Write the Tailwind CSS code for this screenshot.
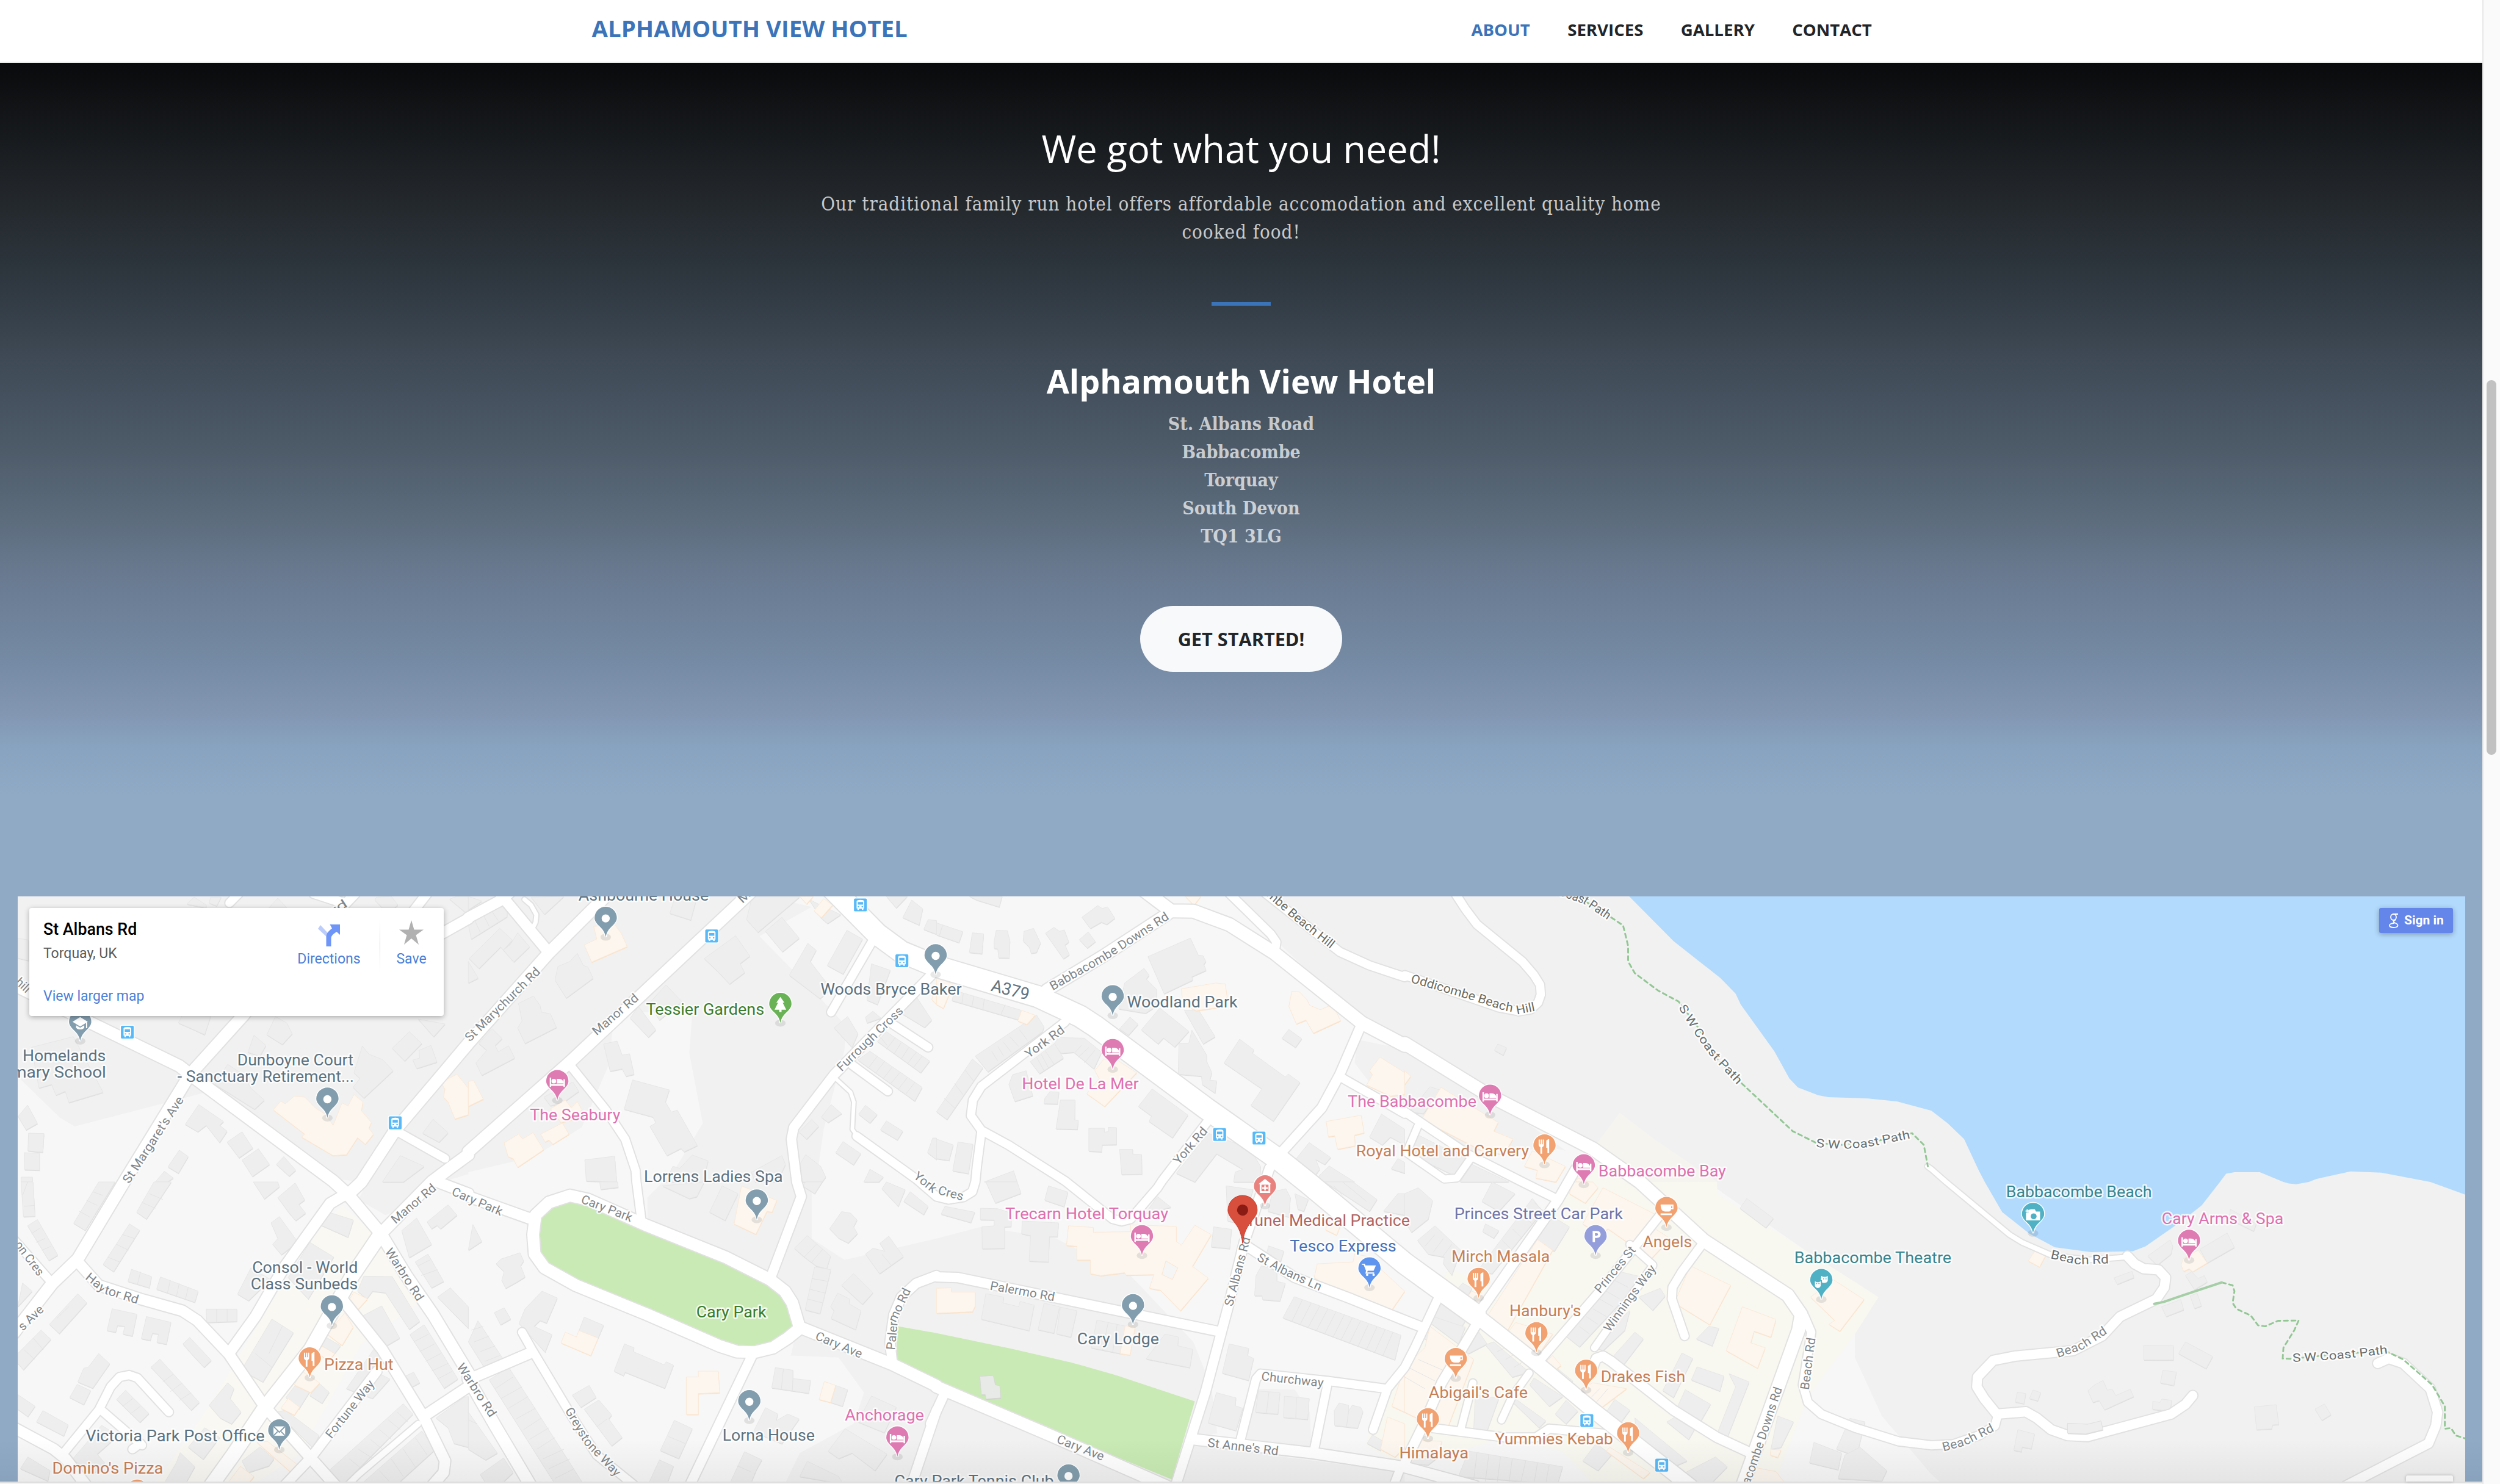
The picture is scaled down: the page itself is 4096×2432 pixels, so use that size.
<!DOCTYPE html>
<html lang="en">
<head>
<meta charset="utf-8">
<title>Alphamouth View Hotel</title>
<script src="https://cdn.jsdelivr.net/npm/@tailwindcss/browser@4"></script>
</head>
<body class="flex h-[2432px] w-[4096px] overflow-hidden bg-white font-['Open_Sans',sans-serif]">

<div class="flex h-[2432px] w-[4067px] flex-col">
  <header class="h-[103px] shrink-0 border-b-2 border-[#e9ecea] bg-white">
    <div class="mx-auto flex h-[101px] w-[2186px] items-center justify-between px-[29px] pb-[8px]">
      <a class="text-[38.4px] leading-[52px] font-bold text-[#3b74b9] pb-[2px] whitespace-nowrap">ALPHAMOUTH VIEW HOTEL</a>
      <nav class="flex gap-[61.4px] pr-[30.7px] pt-[2px] text-[27.6px] leading-[40px] font-bold text-[#212529]">
        <a class="text-[#3b74b9]">ABOUT</a><a>SERVICES</a><a>GALLERY</a><a>CONTACT</a>
      </nav>
    </div>
  </header>

  <section class="flex h-[1366px] shrink-0 flex-col items-center bg-[linear-gradient(180deg,#090a0c_0px,#212529_206px,#2f3840_360px,#3e4955_480px,#4c5967_620px,#5b6b7b_740px,#68798f_830px,#758aa4_980px,#8397b3_1070px,#88a3bf_1120px,#90aac6_1200px)] pt-[103px] text-center text-white">
    <h2 class="text-[61.4px] leading-[74px] whitespace-nowrap">We got what you need!</h2>
    <p class="mt-[31px] w-[1500px] font-['DejaVu_Serif_Condensed','DejaVu_Serif',serif] text-[31px] leading-[46px] tracking-[1px] text-white/75"><span class="whitespace-nowrap">Our traditional family run hotel offers affordable accomodation and excellent quality home</span><br>cooked food!</p>
    <hr class="mt-[92px] h-[6px] w-[97px] border-0 bg-[#3b74b9]">
    <h3 class="mt-[92px] text-[53.7px] leading-[64px] font-bold whitespace-nowrap">Alphamouth View Hotel</h3>
    <address class="mt-[15px] font-['DejaVu_Serif_Condensed','DejaVu_Serif',serif] text-[30px] leading-[46px] font-bold text-white/70 not-italic">St. Albans Road<br>Babbacombe<br>Torquay<br>South Devon<br>TQ1 3LG</address>
    <a class="mt-[91px] flex h-[108px] w-[331px] items-center justify-center rounded-full bg-[#f8f9fa] text-[30.7px] font-bold text-[#212529]">GET STARTED!</a>
  </section>

  <section class="relative h-[959px] shrink-0 bg-[#90aac6] pl-[29px]">
    <svg id="map" class="block h-[959px] w-[4010px] bg-[#f7f7f7]" viewBox="30 1532 4182 1000" preserveAspectRatio="none"></svg>
    <div class="absolute top-[19px] left-[48px] flex h-[177px] w-[679px] rounded-[4px] bg-white font-[Roboto,sans-serif] shadow-[0_2px_8px_rgba(0,0,0,0.3)]">
      <div class="flex flex-1 flex-col pt-[18px] pl-[23px]">
        <b class="text-[26.8px] leading-[34px] font-medium text-black">St Albans Rd</b>
        <span class="mt-[8px] text-[23px] leading-[30px] text-[#5b5b5b]">Torquay, UK</span>
        <a class="mt-[40px] text-[23px] leading-[30px] text-[#4a80d9]">View larger map</a>
      </div>
      <div class="mr-[27px] flex w-[111px] flex-col items-center pt-[27px]">
        <svg class="h-[36px] w-[36px]" viewBox="0 0 36 36"><path d="M3 2L17 17L15 23L-1 8Z" transform="translate(1 -1)" fill="#bdcdfb"/><path d="M13.500 36V22C13.500 15 16 12 23 6.500L19.500 0H36V17L30.500 12C23 17 21.500 19 21.500 24V36Z" fill="#6e95f7"/></svg>
        <span class="mt-[8px] text-[23px] leading-[26px] text-[#4a80d9]">Directions</span>
      </div>
      <div class="mt-[19px] h-[85px] w-[1.500px] bg-[linear-gradient(180deg,#fff,#d8d8d8_50%,#fff)]"></div>
      <div class="mr-[2px] flex w-[102px] flex-col items-center pt-[20px]">
        <svg class="h-[40px] w-[40px]" viewBox="0 0 40 40"><path d="M20 0L24.500 15.500H40L27.500 24.500L32 40L20 30L8 40L12.500 24.500L0 15.500H15.500Z" fill="#b1b1b1"/></svg>
        <span class="mt-[11px] text-[23px] leading-[26px] text-[#4a80d9]">Save</span>
      </div>
    </div>
    <a class="absolute top-[19px] right-[48px] flex h-[41px] w-[121px] items-center gap-[9px] rounded-[3px] bg-[#6485ea] pl-[16px] text-white shadow-[0_2px_8px_rgba(0,0,0,0.3)]">
      <svg class="h-[24px] w-[16px]" viewBox="0 0 16 24" fill="none" stroke="#fff" stroke-width="1.800"><ellipse cx="7.500" cy="6" rx="4.500" ry="5"/><path d="M15 1H9M11 9C11 12 7 12 7.500 14C8 15.500 14.500 16 14.500 19.500C14.500 22 11 23 7.500 23S1 22 1 19.500S5 15.800 9 16"/></svg>
      <span class="font-[Roboto,sans-serif] text-[21px] font-bold whitespace-nowrap">Sign in</span>
    </a>
    <div class="absolute right-[48px] bottom-0 h-[10px] w-[77px] rounded-t-[3px] bg-white shadow-[0_0_5px_rgba(0,0,0,0.25)]"></div>
    <div class="absolute bottom-0 left-0 h-[70px] w-full bg-[linear-gradient(180deg,rgba(0,0,0,0),rgba(0,0,0,0.05))]"></div>
  </section>
  <div class="h-[4px] shrink-0 border-t-2 border-[#dedede] bg-[#f3f3f3]"></div>
</div>

<aside class="h-[2432px] w-[29px] border-l-2 border-[#e8e8e8] bg-[#fafafa] pt-[623px] pl-[5px]">
  <div class="h-[614px] w-[16px] rounded-full bg-[#c1c1c1]"></div>
</aside>

<script>
// Survey sheets: origin x, origin y, x units per pixel, y units per pixel.
const SHEET = {
  A:[0,1500,1.96,3], B:[800,1500,1.96,3], C:[1600,1500,1.96,3], D:[2400,1500,1.742,3], E:[3300,1500,1.613,3],
  F:[0,2020,1.96,3], G:[800,2020,1.96,3], H:[1600,2020,1.96,3], I:[2400,2020,1.742,3], J:[3300,2020,1.613,3]
};
function pts(s){
  let t, out=[];
  for(const k of s.trim().split(/\s+/)){
    if(SHEET[k]) t=SHEET[k];
    else { const [x,y]=k.split(',').map(Number); out.push([t[0]+x/t[2], t[1]+y/t[3]]); }
  }
  return out;
}
const d = (s,close)=>'M'+pts(s).map(p=>p[0].toFixed(1)+' '+p[1].toFixed(1)).join('L')+(close?'Z':'');
let out='';
const poly=(s,fill,extra='')=>{ out+=`<path d="${d(s,1)}" fill="${fill}" ${extra}/>`; };

// Land tones
poly('A 59,96 B 1000,96 1150,150 975,300 1180,620 1265,760 1260,880 1190,1290 1165,1560 G 1150,20 1150,290 1260,400 1568,290 H 0,290 150,230 400,290 650,480 860,820 920,1050 940,1290 870,1300 860,1350 1568,1490 1568,1548 G 1060,1548 1110,1390 1290,1240 1325,1080 1240,900 1080,890 1100,760 600,190 600,80 B 690,1500 785,1260 740,900 750,690 490,690 470,960 380,1280 220,1430 0,1510 A 1568,1520 1480,1560 1210,1560 1100,1540 690,1100 250,1275 200,1230 59,1020','#f1f1f1');
poly('C 1000,96 1135,320 1430,745 1568,870 D 250,1115 560,1390 700,1560 I 900,0 1200,360 1410,590 1340,780 1340,900 1420,1200 1568,1500 J 30,1548 1471,1548 E 1471,96','#f1f1f1');
poly('C 1410,830 1400,950 1450,1050 1568,1180 D 200,1400 450,1390 480,1400 250,1120 0,880','#f1f1f1');
poly('F 1200,90 1230,0 1440,0 1360,130 1290,170','#f1f1f1');
poly('H 1070,1060 1200,1065 1250,1180 1255,1360 1030,1330','#f1f1f1');
// Shopping areas
poly('F 1145,120 1250,260 1420,600 1210,830 1000,1400 850,1548 520,1548 700,1150 900,640 1060,260','#f9f8f2');
poly('I 930,60 1200,360 1410,590 1340,780 1200,1100 1100,1548 560,1548 470,1380 300,1310 0,1460 H 1440,1350 1450,1270 1568,900 I 60,700 130,440 330,600 500,0 D 560,1390 640,1340 750,1350 930,1560','#f8f7f0');
poly('D 640,1205 750,1350 930,1560 700,1560 560,1390','#f5f4ee');
// Sea and parks
poly('D 668,96 800,325 940,515 985,595 1000,650 1050,770 1100,890 1145,1030 1170,1075 1230,1115 1260,1125 1380,1132 1465,1147 1568,1195 E 0,1195 45,1260 90,1340 130,1500 J 147,0 195,155 270,265 340,335 440,360 555,355 590,330 690,200 745,120 795,0 E 812,1518 835,1510 905,1510 970,1560 J 985,8 1005,12 1040,0 E 1060,1545 1155,1506 1240,1512 1375,1560 J 1375,0 1471,65 E 1471,96','#b2dafc');
poly('G 335,95 280,125 240,190 232,270 240,370 265,420 370,515 600,645 850,820 900,840 960,845 1020,820 1060,780 1090,735 1070,630 1050,580 1020,530 850,410 600,255 375,102','#c9eab4');
poly('G 1432,738 1568,775 H 0,775 250,855 450,925 600,990 865,1125 788,1525 380,1270 0,1015 G 1568,1015 1437,930','#c9eab4');

// Buildings
const grey=`A 650,100 690,140 690,155 625,135|A 705,100 740,100 725,145 700,130|A 930,105 960,155 900,155|A 1260,100 1310,96 1332,140 1320,155 1280,155 1255,115|A 1530,96 1568,96 1568,190 1505,110|A 59,310 95,320 95,425 59,412
A 610,705 705,710 685,805 635,770 597,745|A 105,870 245,815 345,1100 230,1153 218,1095 187,1115 172,1060 130,1078|A 850,808 890,860 870,915 830,895|A 922,712 960,745 978,800 945,855 893,805|A 1370,790 1412,850 1355,940 1313,875|A 1443,860 1463,945 1395,978 1382,935 1405,925 1403,885
A 1213,863 1235,905 1280,932 1316,990 1218,1130 1182,1075 1205,1030 1185,1000|A 762,957 815,1010 840,1080 885,1140 852,1187 720,1060|A 665,1163 748,1250 735,1270 760,1300 735,1358 690,1270 662,1303 620,1265|A 810,1303 846,1387 800,1436 760,1356|A 865,1390 902,1470 845,1532 810,1448|A 600,1397 630,1430 597,1515 562,1483|A 950,1430 990,1500 968,1530 925,1470|A 95,1310 147,1312 143,1408 93,1400|A 80,1410 132,1413 132,1500 82,1497|A 92,1166 125,1260 87,1293 60,1225|A 1450,1238 1500,1308 1470,1356 1415,1310|A 1340,1425 1420,1480 1350,1560 1280,1560|A 1400,725 1490,750 1452,815|A 550,1505 580,1540 560,1560 520,1560|A 70,1535 108,1535 108,1560 70,1560
B 105,260 148,320 118,370 140,345 165,283 205,355 152,432 108,355 36,465 3,415|B 0,240 75,165 130,145 130,200 10,315|B 210,100 320,96 255,188|B 0,96 45,120 0,165|B 365,388 385,450 400,458 418,515 328,617 290,525 300,455 340,430|B 218,607 240,655 245,690 275,698 295,768 190,850 165,770 180,735 168,645|B 80,775 113,825 90,860 100,893 135,862 155,925 45,1013 25,950 62,885 35,850|B 0,430 33,515 0,540|B 690,110 762,120 745,217 675,183
B 950,98 1110,98 970,280 932,215|B 1050,203 1108,310 1052,380 995,275|B 1140,110 1165,130 1247,190 1203,235 1180,205|B 895,298 943,402 910,440 925,487 875,545 835,480 790,415|B 1137,337 1165,372 1145,430 1215,570 1178,620 1075,500|B 1268,270 1320,315 1255,494 1202,450|B 1350,442 1413,475 1370,650 1335,628|B 662,550 715,635 640,730 605,645|B 570,660 628,780 603,818 542,720|B 498,838 515,910 540,903 555,1008 528,1018 515,980 475,992 453,853|B 350,1048 370,1095 320,1150 275,1170 253,1125
B 550,1037 673,1088 660,1150 680,1202 700,1192 767,1373 723,1405 712,1388 665,1425 608,1275 628,1258 618,1227 522,1187|B 1270,712 1305,800 1285,870 1225,770|B 1400,790 1545,940 1515,1000 1370,840|B 1345,890 1520,1075 1495,1145 1305,935|B 1355,685 1382,720 1335,745 1330,715|B 1500,610 1552,730 1528,768 1445,690|B 1215,1163 1250,1210 1205,1255 1182,1228|B 1150,1240 1173,1275 1133,1340 1108,1305|B 1330,1167 1369,1215 1345,1258 1307,1213|B 1400,1247 1455,1300 1437,1345 1380,1293|B 1255,1353 1314,1415 1290,1472 1230,1410|B 1130,1420 1180,1480 1197,1535 1185,1560 1115,1560 1100,1495
B 390,1447 490,1428 497,1560 395,1555|B 750,1422 803,1452 785,1560 660,1560 685,1480 708,1490|B 1050,1425 1062,1470 1035,1560 960,1560 948,1510|B 1400,96 1470,96 1433,155|B 1485,115 1522,160 1510,243 1455,205|B 1540,215 1568,220 1568,290 1525,265|B 1345,1495 1390,1535 1375,1560 1325,1560|B 1555,1335 1568,1335 1568,1445 1538,1410
C 110,96 220,96 210,150 135,115|C 0,232 88,277 75,333 0,293|C 120,283 158,288 152,390 110,383|C 200,270 237,272 246,325 243,412 208,410 205,365 193,362 193,325|C 325,260 348,335 335,383 317,388 310,355 290,325 293,275|C 393,255 412,275 428,268 443,330 430,345 445,395 425,416 365,285|C 540,143 555,158 573,150 597,208 570,240 552,228 515,260 487,203|C 508,278 532,328 505,361 478,318|C 695,465 712,500 702,520 738,575 735,660 700,695 610,672 630,540|C 648,715 675,752 643,808 613,775|C 748,668 845,788 798,868 760,822 742,852 686,780|C 830,680 878,680 933,815 893,852
C 850,310 877,398 892,400 902,430 895,445 903,475 855,508 858,525 762,595 708,405
C 855,782 905,910 905,942 922,1000 915,1038 938,1042 933,1105 890,1060 887,1018 809,1007 812,850 845,848|C 1180,778 1223,826 1202,870 1157,823|C 1015,828 1062,882 1058,900 1168,1022 1178,1007 1217,1050 1128,1248 1053,1167 1090,1083 963,950|C 722,1083 842,1217 790,1333 712,1250 720,1222 676,1173|C 408,820 495,823 553,895 527,980 460,895 418,900 393,855|C 395,850 425,925 345,1005 314,943|C 335,705 360,765 355,790 172,995 130,915|C 120,930 155,975 35,1240 0,1200|C 300,990 322,1118 262,1147 242,1060 255,1010|C 380,1097 410,1100 405,1160 360,1158 363,1130|C 415,1140 464,1140 463,1243 475,1245 472,1290 400,1288
C 510,1285 562,1285 562,1305 575,1302 575,1280 603,1282 603,1368 555,1370 553,1405 510,1402|C 613,1393 657,1393 657,1417 687,1420 688,1520 620,1522|C 0,1340 56,1370 42,1450 0,1440|C 72,1355 122,1367 107,1517 54,1503|C 258,1503 270,1560 160,1560|C 60,578 280,678 300,740 52,630|C 910,1310 1050,1390 1085,1480 1083,1560 995,1560 1000,1510 1025,1495 938,1415 865,1560 803,1515|C 1248,1358 1320,1435 1300,1470 1270,1445 1283,1495 1265,1533 1200,1450|C 1315,1478 1400,1560 1290,1560 1280,1530|C 1490,1212 1568,1290 1568,1370 1520,1330 1493,1370 1450,1330|C 1545,1440 1568,1460 1568,1515 1523,1493
D 277,853 303,872 293,910 267,885|D 75,1072 108,1090 55,1210 15,1200|D 35,1315 180,1440 150,1530 20,1420|D 200,1470 310,1560 165,1560
F 70,0 110,0 117,175 78,178|F 125,193 193,375 163,403 92,225|F 330,0 385,0 285,248 246,212|F 515,0 573,0 490,190 457,155|F 433,215 467,248 380,460 345,423|F 848,0 930,0 935,25 885,87|F 988,5 1020,92 1000,115 1023,160 990,198 968,160 930,80|F 935,178 997,308 942,373 913,320 930,290 907,210|F 440,448 507,485 500,543 428,510|F 537,487 663,560 652,617 524,550|F 690,652 793,652 793,715 692,720|F 375,650 458,678 443,790 412,780 417,740 393,735 387,770 358,762|F 490,690 572,720 557,832 525,822 530,780 510,775 503,812 473,803|F 260,573 290,620 198,777 165,730|F 137,760 170,807 78,963 59,930 59,880
F 635,797 707,915 683,950 640,880 612,830|F 330,880 367,932 310,1057 260,1025 280,955 295,950|F 258,1038 303,1070 280,1142 233,1105|F 535,908 667,1130 640,1170 505,950|F 420,1068 498,1187 468,1232 390,1115|F 143,1172 228,1245 213,1302 122,1230|F 59,1090 117,1150 93,1203 59,1165|F 93,1410 167,1480 160,1533 68,1470|F 340,1248 395,1300 325,1395 350,1440 310,1500 243,1420|F 75,518 107,560 59,640|F 910,703 982,773 880,1025 808,965|F 762,1030 783,1060 770,1110 807,1180 775,1240 737,1210 700,1145|F 685,1260 735,1310 680,1422 630,1360|F 603,1388 652,1460 620,1548 548,1548 590,1440
F 1110,160 1183,195 1165,283 1065,215 1075,172|F 1037,310 1117,385 1032,600 965,490|F 840,440 905,500 832,608 795,575|F 1218,483 1313,485 1405,715 1370,755 1290,568 1247,560 1228,600 1197,560|F 1278,635 1338,800 1275,857 1210,690|F 1395,185 1445,320 1370,388 1345,250|F 1500,117 1530,170 1475,240 1463,222 1445,240 1430,205|F 1433,370 1485,510 1445,543 1390,410|F 1420,732 1533,1010 1487,1057 1372,783|F 1508,543 1568,640 1568,750 1465,590|F 1255,850 1280,883 1240,960 1305,1010 1247,1110 1160,1060|F 1350,1137 1382,1190 1150,1548 1120,1548 1098,1485|F 1412,1277 1458,1370 1330,1548 1210,1548|F 1555,1103 1568,1100 1568,1360 1520,1340 1500,1260 1460,1210|F 955,1170 1068,1300 1047,1362 927,1180|F 1070,1035 1102,1078 1078,1135 1037,1095|F 870,1358 917,1420 900,1455 830,1490 810,1430
F 1090,795 1140,840 1120,880 1072,835|F 990,1040 1037,1075 1000,1165 957,1105|F 1385,975 1405,1030 1380,1050 1358,995
G 15,218 45,305 0,350|G 173,363 185,405 175,430 190,487 160,515 125,545 112,505 120,460 93,420 110,395|G 120,645 142,703 108,732 87,670|G 247,560 298,595 262,723 240,710 220,740 280,783 257,873 170,725 190,650|G 388,693 453,735 435,800 370,765|G 523,830 555,850 552,870 655,937 663,922 687,940 658,1057 525,975 520,993 488,970|G 32,712 122,920 65,980 0,820|G 135,950 385,1548 290,1548 70,1015|G 405,1043 428,1105 377,1155 348,1093|G 437,1118 480,1195 470,1215 515,1310 480,1353 388,1165|G 690,1222 750,1265 705,1418 643,1377|G 640,1425 687,1458 665,1548 603,1548|G 925,1383 983,1425 965,1475 945,1548 875,1548
G 850,20 903,60 860,197 808,155|G 650,20 790,0 765,75 740,85|G 1135,275 1213,380 1200,445 1165,430 1125,385 1092,340|G 1160,435 1214,450 1178,675 1128,655|G 1250,152 1280,160 1302,195 1290,230 1303,265 1272,313 1240,288 1210,240|G 1408,278 1457,383 1377,470 1330,370 1355,340 1395,355 1378,315|G 1290,470 1355,568 1320,627 1250,530|G 1237,570 1277,600 1275,625 1315,660 1297,757 1215,700 1225,660 1213,640|G 1028,952 1087,965 1087,1008 1146,1018 1140,1083 1016,1055|G 1230,1043 1270,1065 1253,1150 1213,1130|G 995,1157 1037,1190 1030,1225 1070,1190 1108,1215 1050,1342 955,1280|G 1350,1097 1433,1155 1393,1285 1305,1230|G 1262,1265 1402,1395 1362,1480 1285,1390 1240,1418 1205,1380|G 1135,1432 1240,1510 1255,1548 1110,1510|G 1480,50 1540,125 1525,167 1458,100|G 1400,0 1463,40 1440,125 1385,35|G 1130,0 1185,0 1160,60 1120,20|G 440,0 500,0 502,27 443,38|G 0,1180 97,1390 58,1425 0,1370|G 118,1415 150,1490 110,1548 60,1548 40,1500
H 375,20 440,52 427,127 362,93|H 165,0 270,0 283,58 197,108|H 28,125 128,155 115,208 15,165|H 147,135 205,137 250,160 250,228 228,230 228,340 153,342 152,230 193,225 193,195 147,193|H 287,200 409,210 405,280 378,280 375,410 310,405 315,275 285,265|H 165,573 225,590 222,620 275,640 280,612 327,632 310,762 150,703|H 360,622 412,640 393,775 340,757|H 415,642 470,660 450,795 402,778|H 537,708 635,740 615,880 518,850|H 765,780 810,795 808,840 858,858 848,952 702,907|H 928,230 988,243 982,342 920,332|H 980,830 1045,853 1042,890 1062,905 1045,1017 957,980|H 937,1080 1003,1107 1000,1147 1025,1160 1003,1275 910,1235|H 1112,328 1163,355 1150,420 1100,400|H 1070,480 1088,430 1140,450 1140,510 1168,520 1150,610 1092,603 1090,583 1065,583
H 1198,588 1555,785 1535,912 1160,697|H 1078,1072 1150,1080 1143,1190 1068,1180|H 1165,1098 1248,1110 1243,1217 1162,1207|H 1348,1133 1380,1145 1380,1175 1392,1145 1420,1155 1428,1178 1410,1262 1333,1248 1332,1172|H 1460,1297 1497,1330 1487,1377 1442,1340|H 1300,0 1395,0 1475,90 1450,150|H 970,20 1060,40 1050,90 1010,210 975,200|H 1125,50 1170,35 1185,80 1180,180 1110,150|H 740,75 785,130 700,160|H 1200,60 1245,90 1230,150 1210,140|H 1545,60 1568,60 1568,170 1497,150
I 260,0 328,60 280,150 230,100|I 90,225 167,350 140,478 115,420 118,385 70,370 38,300|I 40,30 83,95 70,190 20,258 0,200 0,60|I 240,215 280,250 265,288 232,255|I 380,85 410,150 260,470 215,460|I 415,150 490,230 445,355 375,295|I 172,518 200,545 180,610 143,580|I 120,590 188,690 160,770 80,700|I 85,690 180,745 160,830 78,725|I 65,765 145,830 120,890 58,800|I 215,755 245,830 190,880 170,860|I 265,820 370,975 320,1000 240,835|I 385,1005 470,1100 430,1150 372,1040|I 640,460 712,490 520,845 480,790 590,570|I 670,660 655,760 590,865 570,850 620,730|I 685,770 710,805 650,940 615,905|I 760,545 775,585 738,658 697,590|I 905,740 935,750 915,840 868,805|I 1018,85 1097,187 1075,235 998,135|I 870,948 950,995 938,1072 853,1015|I 825,877 857,905 800,1105 768,1070|I 965,983 1025,1025 960,1310 930,1290 985,1050|I 835,1065 910,1140 880,1230 805,1180
I 1110,1200 1157,1230 1120,1360 1090,1370|I 1325,1212 1370,1230 1345,1405 1285,1370|I 1218,1335 1300,1390 1290,1475 1205,1440|I 1355,1360 1435,1480 1420,1533 1290,1520 1310,1400|I 925,1410 960,1460 910,1548 850,1548 835,1490|I 625,1115 670,1170 640,1240 600,1180|I 685,1210 840,1430 800,1460 690,1290|I 570,1340 615,1400 575,1480 530,1430|I 190,1380 470,1460 455,1548 160,1510|I 320,1100 420,1225 400,1260 310,1110|I 480,1120 515,1175 480,1240 448,1190|I 450,950 500,1020 490,1090 430,990|I 210,1090 280,1110 240,1300 205,1280|I 30,1420 100,1410 70,1450 20,1445|I 810,1200 865,1260 845,1320 780,1230
J 658,297 665,330 660,370 622,427 596,380|J 815,262 835,335 760,415 740,345|J 824,140 895,215 888,252 820,190|J 553,458 558,490 512,525 503,492|J 717,460 735,495 752,480 760,512 725,552 700,480|J 732,570 744,635 725,648 713,585|J 687,603 695,655 647,690 634,640|J 585,838 667,840 667,913 585,912|J 700,820 775,895 757,957 681,880|J 638,965 675,975 668,1043 631,1030|J 473,1018 485,1068 498,1062 508,1095 548,1063 557,1100 477,1168 462,1120 445,1130 431,1070 450,1040|J 237,1077 260,1085 255,1137 231,1128|J 280,1067 301,1080 293,1122 270,1110|J 635,1113 662,1120 658,1175 609,1165 610,1125 630,1130|J 890,1153 950,1142 957,1243 940,1245 938,1265 896,1270|J 1083,1138 1101,1193 1076,1222 1057,1165|J 238,1270 284,1292 275,1368 250,1358 248,1383 227,1375`;
const cream=`A 985,1120 1020,1125 1055,1180 1090,1215 1115,1270 1145,1155 1165,1170 1185,1112 1215,1150 1210,1195 1243,1255 1235,1285 1250,1315 1223,1367 1197,1333 1160,1420 1115,1425 1010,1330 1020,1315 915,1190 940,1145 955,1160|A 1530,1008 1568,1080 1568,1215 1523,1237 1500,1150 1485,1125 1490,1085 1476,1050
B 420,250 490,240 512,285 532,353 413,433 388,345 430,315|B 325,1140 345,1180 365,1147 380,1190 350,1240 310,1255 275,1185|B 0,1045 18,1040 50,1135 0,1172|B 168,1315 182,1340 217,1307 252,1395 165,1485 150,1440 133,1430 120,1360|B 315,1258 337,1315 283,1367 270,1345 257,1355 242,1315|B 1110,96 1155,96 1133,135|B 1190,108 1220,140 1182,205 1158,170|B 1568,540 1568,650 1552,625
C 833,96 885,96 862,142|C 0,500 55,550 23,670 0,650|C 820,570 935,540 967,545 973,610 945,665 870,682 825,650|C 285,680 330,705 303,752 272,735|C 1190,583 1215,585 1240,625 1250,655 1285,677 1327,650 1353,733 1262,797 1237,730 1205,750 1180,660|C 560,930 605,935 670,1000 563,1173 503,1107 545,1030 530,990|C 1485,920 1568,1000 1568,1110 1520,1120 1440,1063 1460,1010 1450,990|C 1305,1250 1422,1218 1432,1308 1400,1320 1402,1375 1343,1392 1333,1323 1312,1328
D 108,1075 160,1130 278,1255 265,1300 322,1340 295,1420 230,1400 50,1240|D 380,1400 478,1480 450,1560 390,1540 395,1500 356,1480|D 0,990 18,1018 0,1060|D 515,1540 550,1560 510,1560
F 1185,565 1230,600 1190,668 1155,640|F 1155,670 1182,745 1145,838 1095,780|F 1070,835 1120,880 1100,920 1060,870|F 1010,970 1070,1030 1040,1080 985,1040|F 965,1110 1003,1155 985,1195 940,1160|F 895,1330 1000,1455 980,1497 860,1335|F 805,1458 850,1510 830,1548 760,1548
G 325,770 362,795 370,762 435,800 410,890 310,825|G 915,20 1033,95 1017,155 1000,150 963,268 890,215|G 770,970 837,970 842,1080 770,1085 770,1192 730,1192 730,1000 770,1000|G 1192,1023 1230,1043 1213,1130 1175,1115
H 442,225 525,233 525,258 650,255 650,220 803,228 803,305 820,325 865,222 920,270 857,433 910,493 817,660 750,555 713,545 728,475 635,478 630,465 550,480 515,470 515,400 470,400 470,330 435,325|H 0,545 50,543 50,565 130,565 130,635 120,665 0,673|H 632,737 665,745 648,887 615,880|H 1275,420 1395,410 1400,370 1440,380 1568,560 1525,655 1310,535 1265,490|H 1310,200 1353,220 1340,273 1303,245|H 1510,1205 1568,1240 1568,1360 1535,1410 1487,1370|H 1560,980 1568,980 1568,1180 1525,1150
I 500,0 560,0 575,30 537,108 490,60|I 590,30 750,170 680,330 605,240 580,270 530,215|I 395,295 440,350 300,780 245,690|I 183,595 225,640 240,590 200,560|I 330,720 440,780 390,905 300,790|I 75,740 205,910 130,1250 90,1255 0,1180 0,950 60,850|I 440,890 465,940 440,975 412,935|I 560,1030 660,1060 575,1170 510,1075|I 850,430 970,530 908,732 803,620|I 1005,640 1105,705 1090,795 1040,765 1030,825 1073,850 1050,955 957,865|I 1275,500 1367,603 1295,765 1263,730 1280,710 1208,590|I 745,240 790,290 730,400 700,350|I 610,1360 730,1490 710,1520 600,1380|I 1090,1370 1120,1375 1110,1412 1088,1400|I 1045,1465 1105,1485 1130,1540 1030,1540|I 40,1325 110,1330 100,1410 25,1400
J 288,345 316,372 298,436 267,405|J 735,350 760,415 720,460 710,445 695,458 688,425 695,390`;
const each=(s,f)=>s.split(/[|\n]/).filter(Boolean).forEach(f);
const building=(s,fill,edge,shade)=>{ const p=d(s,1); out+=`<path d="${p}" fill="${shade}" transform="translate(.5 1.6)"/><path d="${p}" fill="${fill}" stroke="${edge}" stroke-width="1"/>`; };
each(grey,s=>building(s,'#eeeeee','#e6e6e6','#dfdfdf'));
each(cream,s=>building(s,'#fcf6ef','#fbe8d5','#f9e2ca'));
poly('H 768,405 808,440 790,500 755,475','#f5f5f5','stroke="#fbe3cb"');
building('H 145,997 190,992 197,1040 212,1045 215,1107 165,1113 163,1090 150,1090','#e8eae7','#d5d8d2','#cfd2cc');
// Party walls across the terraces
each(`B 1403,860 1370,800|F 92,0 75,70|F 115,120 80,125|F 135,235 105,265|F 150,290 120,310|F 170,330 140,350|F 345,70 310,50|F 325,120 290,95|F 300,180 265,150|F 545,90 500,60|F 520,135 475,105|F 450,290 410,270|F 430,350 390,320|F 400,410 360,385|F 470,460 460,525|F 570,505 560,570|F 600,520 590,590|F 630,540 620,605|F 725,652 725,718|F 760,652 760,716|F 230,640 190,700|F 145,860 110,800|F 115,910 80,860|F 580,985 545,1025|F 610,1030 570,1075|F 640,1080 600,1120|F 445,1110 410,1150|F 470,1150 435,1190|F 1465,450 1410,480|F 1440,400 1400,430|F 1435,780 1385,820|F 1455,830 1405,870|F 1475,880 1425,920|F 1500,930 1445,970|F 1515,970 1465,1010|F 1330,1180 1365,1230|F 1300,1220 1340,1270|F 1270,1270 1310,1320|F 1240,1320 1280,1370|F 1200,1370 1250,1420|F 1170,1420 1210,1470|F 1390,1310 1430,1400|F 1350,1370 1390,1460|F 1310,1420 1350,1510|F 1270,1480 1310,1548|F 945,740 900,880|F 855,880 910,950
G 10,760 50,740|G 20,820 70,790|G 40,870 90,840|G 55,920 105,890|G 90,1060 150,1000|G 110,1110 180,1050|G 135,1160 200,1100|G 160,1215 225,1160|G 185,1270 245,1210|G 205,1320 270,1260|G 230,1370 290,1310|G 250,1420 320,1370|G 270,1470 340,1420|G 290,1520 355,1470|G 0,1220 30,1240|G 1150,495 1205,510|G 1143,550 1195,570|G 1135,600 1187,620|G 1165,320 1125,385|G 1187,345 1148,415|G 1385,370 1415,425|G 1055,960 1048,1065|G 1087,1008 1085,1070|G 670,1305 725,1340|G 900,1455 945,1485|G 430,1255 465,1215
H 1225,605 1190,715|H 1255,620 1218,730|H 1283,637 1245,745|H 1310,652 1272,762|H 1337,668 1300,778|H 1365,683 1328,795|H 1392,698 1355,810|H 1420,713 1383,826|H 1447,728 1412,842|H 1475,743 1440,858|H 1502,758 1467,874|H 1528,772 1495,890|H 575,720 555,862|H 605,730 590,872|H 1113,1078 1105,1185|H 1205,1105 1203,1212|H 1380,1175 1373,1255|H 1330,20 1360,70|H 1360,0 1440,100
C 20,245 10,295|C 90,590 85,645|C 125,605 118,665|C 160,620 155,680|C 230,650 215,705|C 278,780 305,835|C 245,815 275,865|C 225,845 250,895|C 205,865 225,915|C 185,890 205,940|C 365,890 395,960|C 350,905 375,975|C 335,920 360,990|C 485,860 465,895|C 510,870 475,920|C 530,885 495,950|C 95,985 125,1045|C 60,1055 90,1115|C 25,1130 60,1180
B 1430,820 1400,880|B 1450,845 1425,905|B 1475,870 1450,930|B 1500,895 1470,955|B 1520,915 1490,975|B 1370,915 1340,975|B 1395,940 1365,1000|B 1420,970 1390,1030|B 1445,1000 1415,1055|B 1470,1025 1440,1085|B 1495,1050 1465,1110|B 20,215 40,280|B 50,190 70,250|B 75,165 100,220
I 620,500 665,540|I 600,560 640,600|I 580,600 620,640|I 560,650 600,690|I 540,690 575,730|I 520,740 550,780|I 385,105 420,160|I 350,170 385,225|I 320,240 350,290|I 290,300 320,350|I 215,1390 205,1530|I 250,1400 240,1535|I 285,1410 275,1540|I 320,1420 310,1545|I 360,1430 345,1545|I 395,1440 385,1545|I 430,1450 420,1545|I 580,1060 540,1130|I 605,1060 560,1150|I 275,870 300,850|I 300,910 325,885|I 325,950 350,925|I 0,1000 60,1060|I 10,950 90,1020|I 40,910 120,970|I 90,270 60,330|I 115,290 85,360|I 140,320 110,390`,s=>{out+=`<path d="${d(s)}" stroke="#e3e3e3" stroke-width="1" fill="none"/>`});

// Roads: width, then centre line
const roads=[
[20,'A 40,545 300,742 600,965 645,1020 1115,1555 F 1165,65 1275,265 1360,480 1450,680 1568,980 G 0,1010 90,1250 210,1560'],
[20,'A 960,420 815,705 635,1010 605,1085 415,1560 F 260,395 175,520 40,785'],[14,'F 40,285 175,520'],[14,'A 768,130 800,80'],
[18,'F 260,410 330,530 470,600 610,660 660,710 765,880 885,1150 1040,1415 1125,1560'],
[18,'F 1155,65 1105,110 950,440 855,690 768,875'],
[20,'B 470,80 270,385 0,850 A 1568,850 1480,1010 1325,1290 1210,1560 F 1165,65'],
[14,'A 1340,1310 1490,1440'],[20,'B 970,40 340,945 0,1405 A 1568,1420 1505,1490 1445,1560 F 1275,265'],
[24,'F 1275,265 1180,480 1040,860 885,1160 780,1400 705,1560'],
[16,'F 1262,970 1040,1415 950,1560'],[18,'F 1145,600 1280,860 1400,1160 1420,1210 1490,1430 1485,1490 1445,1560'],[18,'F 1420,1200 1568,1050 G 20,1000 210,875'],
[10,'F 1400,1240 1200,1500 1160,1560'],[14,'G 180,770 215,865 350,1210 430,1400 560,1560'],
[14,'F 210,1395 330,1170 370,1050 400,1000 432,990 460,1005 565,1180'],[14,'F 335,1165 475,1350'],[14,'F 470,1340 443,1370'],[18,'F 40,1255 180,1370 220,1420 290,1560'],
[18,'B 165,40 110,115 0,205 A 1568,210 1300,440'],[18,'B 110,90 270,385'],[16,'A 1190,80 1090,240'],[16,'A 1050,80 1150,130'],[16,'A 1430,80 1370,200'],[7,'B 188,112 210,140 228,190 225,230 215,260'],
[14,'B 340,960 460,1190 525,1340 560,1500 563,1560 G 580,200'],
[18,'F 1465,0 1568,60 G 0,75 210,190'],
[20,'G 340,70 270,105 225,170 217,270 222,370 255,440 360,530 600,680 840,840 900,870 960,872 1020,850 1070,800 1110,750 1085,620 1060,560 1010,500 860,385 600,225 400,90 340,70'],
[20,'G 1110,745 1420,935 1568,1045 H 0,1050 380,1298 770,1560'],
[16,'B 1550,500 1225,1010 1090,1280 1082,1340 1100,1560 G 1115,75 1015,480'],[14,'B 1420,750 1540,870'],[14,'B 1285,960 1405,1095'],[6,'B 1230,1030 1280,1100 1291,1150 1286,1290 1300,1320'],
[14,'B 1300,1325 1500,1545 G 1568,75 H 40,90 90,78 120,50 130,0 C 135,1480 150,1305'],
[14,'C 430,740 150,1070 122,1140 115,1220 150,1295 240,1370 430,1555 H 590,190 620,202 650,190 740,30 C 755,1555 905,1255'],
[14,'B 1355,320 1215,690'],
[20,'C 370,575 560,400 775,185'],[22,'C 690,60 785,170 860,172 980,240 1130,385 1425,745 1568,860 D 0,850 250,1115 560,1390 700,1560 I 770,110 890,300 1140,580 1180,680 1172,760 1005,1560'],
[14,'C 980,80 1120,290 1138,330 1133,380'],
[14,'C 1085,60 1350,380 1450,450 1568,510 D 0,500 280,665 340,685 375,675 397,640 405,600 403,550 385,500 350,430 215,240 180,160 150,80'],
[16,'C 1425,745 1350,1010 1290,1180 1160,1400'],[14,'C 1350,1020 1568,1210 D 0,1200 190,1420 350,1560 I 455,90'],
[12,'D 40,1270 5,1410 118,1545 155,1540 200,1430'],[16,'D 520,1460 I 455,95 225,660'],
[14,'I 760,170 580,560 400,920'],[12,'I 670,320 738,425'],[12,'I 738,430 565,850'],[14,'I 885,320 825,460 797,540 795,600 833,790'],
[14,'I 1190,690 1210,770 1200,880 1185,1040 1200,1130 1240,1190 1340,1260 1470,1330 1568,1350 J 60,1345 130,1300 175,1250 182,1200'],
[16,'J 182,1195 145,1110 125,1050 127,1000 170,915 230,893 390,865 470,790 520,690 620,600 642,540 645,490 625,450 585,445 560,420 540,380'],
[8,'D 1556,1480 E 0,1495 40,1560 J 215,270 250,310 330,375 430,400 540,385'],
[16,'J 182,1190 260,1178 290,1210 330,1270 375,1300 430,1305 660,1190 700,1140 720,1095'],
[16,'J 1230,930 1260,905 1300,930 1375,1060 1395,1180 1390,1250 1370,1340 1140,1560'],
[16,'G 1420,930 1412,820 1425,680 1450,590 1500,520 1568,480 H 0,487 70,490 940,765'],
[16,'C 1115,1490 H 1030,310 980,620 900,1080 800,1560'],[16,'H 1030,320 1200,490 1390,600 1568,710 I 45,740'],
[14,'I 98,600 30,850 0,950 H 1510,1060 1462,1270'],[14,'H 1015,1340 1070,1010 1085,983 1310,1020 1505,1060'],[14,'H 1310,1030 1265,1370'],[18,'H 865,1320 1260,1390 1568,1462 I 210,1560'],[14,'H 1530,1560 1550,1480'],
[16,'I 210,740 110,1030 60,1230 0,1440'],[12,'I 370,980 320,1100 288,1220'],[12,'I 203,1030 165,1280'],[14,'I 75,1260 300,1310 390,1310 430,1265 590,1290'],
[16,'G 950,890 740,1560'],[16,'G 1568,1170 1485,1548'],[16,'H 25,1090 -20,1240'],
[16,'I 560,950 570,905 590,893 615,920 800,1170 930,1310 1030,1390'],
[36,'B 1215,50 1370,290 1450,380 1568,455 C 0,455 340,610 480,710 530,760 900,1180 1150,1450 H 1240,0 1568,418 I 0,418 210,680'],
[25,'I 180,640 400,940 560,1170 850,1560']
];
const line=(s,w,c,x='')=>{ out+=`<path d="${d(s)}" fill="none" stroke="${c}" stroke-width="${w}" stroke-linejoin="round" stroke-linecap="round" ${x}/>`; };
roads.forEach(r=>line(r[1],r[0]+4,'#e1e1e1'));
roads.forEach(r=>line(r[1],r[0],'#ffffff'));
building('J 375,1237 430,1242 467,1225 473,1270 425,1292 375,1288','#eeeeee','#dedede','#dddddd');
// South West Coast Path
line('D 480,60 620,210 650,245 665,350 665,430 685,490 755,580 815,635 870,760 930,930 1000,1050 1155,1300 1225,1360 1300,1370 1420,1345 1510,1310 1545,1370 1557,1480',3,'#92c794','stroke-dasharray="7 6"');
line('J 800,515 830,530 835,560 830,620 840,650 880,685 900,735 920,740 955,712 1012,710 1000,760 970,850 968,905 990,907 1080,890 1250,865 1300,910 1380,1040 1415,1150 1415,1265 1432,1262 1445,1300 1471,1315',3,'#92c794','stroke-dasharray="7 6"');
line('J 614,625 640,615 695,580 800,515',4,'#a5cea7');

// Street names follow the given line
let n=0;
function street(text,s,color='#80868a',size=21){
  const p=pts(s); let L=0; for(let i=1;i<p.length;i++) L+=Math.hypot(p[i][0]-p[i-1][0],p[i][1]-p[i-1][1]);
  const id='s'+(n++);
  out+=`<path id="${id}" d="${d(s)}" fill="none"/><text font-size="${size}" fill="${color}" dy="${size*.35}" stroke="#fff" stroke-opacity=".85" stroke-width="5" stroke-linejoin="round" paint-order="stroke"><textPath href="#${id}" textLength="${(L-1).toFixed(1)}" lengthAdjust="spacingAndGlyphs">${text}</textPath></text>`;
}
street('St Marychurch Rd','B -5,828 235,468');street('Manor Rd','B 420,795 565,605');street('M','B 908,118 940,72');
street('St Margaret\'s Ave','A 420,1560 605,1125');street('hill','A 59,525 98,580');street('rd','A 1110,175 1160,125');
street('Manor Rd','F 1315,200 1455,20');street('Cary Park','F 1515,45 G 115,155');street('Cary Park','G 380,85 550,185');
street('Warbro Rd','F 1300,345 1410,605');street('Warbro Rd','F 1540,935 G 85,1200');street('Haytor Rd','F 292,478 350,550 465,605');street('on Cres','F 59,310 140,475');street('s Ave','F 66,750 140,640');
street('Fortune Way','F 1098,1305 1245,1020');street('Greystone Way','G 335,1160 400,1330 505,1500');
street('Furrough Cross','B 1240,980 1450,670');street('York Cres','B 1498,1520 G 1568,45 H 20,45 92,75');
street('A379','C 185,550 312,600','#5f7380',29);street('Babbacombe Downs Rd','C 382,560 560,405 775,190');
street('York Rd','C 300,910 425,770');street('York Rd','C 800,1460 900,1285');
street('ombe Beach Hill','C 1095,50 1210,205 1330,350','#6d6a5c');street('Oddicombe Beach Hill','D 20,515 200,605 300,660 345,675 388,660','#6d6a5c');
street('S W Coast Path','D 395,30 540,115 612,200','#676d6f');street('S W Coast Path','D 825,655 870,780 915,890 1000,1050','#676d6f',20);street('S W Coast Path','D 1225,1360 1300,1370 1370,1362 1505,1315','#676d6f',20);street('S W Coast Path','J 995,902 1100,890 1170,878 1258,858','#676d6f',20);
street('Cary Ave','G 1165,785 1320,885');street('Palermo Rd','G 1414,860 1425,690 1470,545');street('Palermo Rd','H 180,530 398,590');
street('Cary Ave','H 405,1315 562,1410');street('St Albans Rd','H 977,635 1038,280');street('St Albans Ln','H 1078,380 1160,450 1290,540');
street('Churchway','H 1088,995 1298,1030');street('St Anne\'s Rd','H 908,1335 1147,1380');
street('Princes St','I 572,560 680,335');street('Winnings Way','I 600,760 670,590 740,430');
street('Beach Rd','I 1190,1065 1210,795');street('Babbacombe Downs Rd','I 985,1680 1035,1450 1112,1050');
street('Beach Rd','J 330,370 400,400 490,395','#676d6f');street('Beach Rd','J 345,880 410,840 480,755');street('Beach Rd','J 30,1360 90,1330 170,1255');

// Pins: tip at the origin, symbol centred on the head
const symbol={
dot:'<circle r="7"/>',
bed:'<path d="M-13-7h2.500v11h21V-4h2.500V9H10.500V7h-21V9H-13z"/><circle cx="-6" cy="-1" r="4"/><path d="M-1-5h4c5 0 8 4 8 8H-1z"/>',
fork:'<path d="M-10-11h2v8h1.500v-8h2v8H-3v-8h2v9c0 2-1 3-3 4v11h-3V2c-2-1-3-2-3-4zM3-9c1-1.500 3-3 5-3V12H5V3H3z"/>',
cup:'<path d="M-10-7H12V1H8c-1 4-3 4-6 4h-4c-5 0-8-4-8-12zM8-4v3h2v-3z" fill-rule="evenodd"/><path d="M-10 8H9v3h-19z"/>',
park:'<path d="M-5-10H2c9 0 9 12 0 12h-3v7h-4zM-1-6v4h3c3 0 3-4 0-4z" fill-rule="evenodd"/>',
cart:'<path d="M-13-9h5l1 3h18l-4 9H-3l-1 3H8v2H-7l1-5-4-10h-3z"/><circle cx="-4" cy="10" r="2"/><circle cx="7" cy="10" r="2"/>',
camera:'<path d="M-12-3h4v-5l5-1h6l2 4h7V10h-24zM1-2a5 5 0 1 0 .1 0z" fill-rule="evenodd"/><path d="M-11-9h2v2h2v2h-2v2h-2v-2h-2v-2h2z"/>',
mask:'<path d="M-11 1l3 1.500h4L-1 1V9c-2 5-8 5-10 0zM0-8l3 1.500h5L11-8V0C10 4 4 5 1 3V-1H-1z"/><g fill="#50b1c4"><circle cx="-8" cy="5" r="1"/><circle cx="-4" cy="5" r="1"/><circle cx="4" cy="-3" r="1"/><circle cx="8" cy="-3" r="1"/></g>',
mail:'<path d="M-10-8h20V8h-20z"/><path d="M-10-8L0 2L10-8M-10 8l7-7M10 8L3 1" stroke="#829dad" stroke-width="2" fill="none"/>',
school:'<path d="M0-9L13-1 0 7-13-1zM-7 5L0 9 7 5V9C4 13-4 13-7 9zM10 0h2v10h-2z"/>',
tree:'<path d="M0-13L7-3H4L10 9H2v4h-4V9h-8l6-12h-3z"/>',
medic:'<path d="M-11-5L0-14 11-5H9V10H-9V-5zM-6-4V7H6V-4z" fill-rule="evenodd"/><path d="M-1.200-3h2.500v3.500h3.500v2.500H1.300V6h-2.500V3h-3.500V.5h3.500z"/>'
};
function pin(at,color,sym){
  const [x,y]=pts(at)[0];
  out+=`<g transform="translate(${x} ${y})"><ellipse rx="9" ry="6" fill="#000" opacity=".09"/><path d="M0 0C-1.500-9-5-13-11-19C-16-24-19-28-19-33A19 19 0 1 1 19-33C19-28 16-24 11-19C5-13 1.500-9 0 0Z" fill="${color}" stroke="#fff" stroke-width="3" paint-order="stroke"/><g transform="translate(0 -32)" fill="#fff">${symbol[sym]}</g></g>`;
}
function label(text,at,x2,color){
  const p=pts(at)[0], t=SHEET[at[0]], w=(x2-+at.slice(2).split(',')[0])/t[2];
  out+=`<text x="${p[0]-1.5}" y="${p[1]}" font-size="26.500" textLength="${(w+1).toFixed(1)}" lengthAdjust="spacingAndGlyphs" fill="${color}" stroke="#fff" stroke-opacity=".8" stroke-width="5" stroke-linejoin="round" paint-order="stroke">${text}</text>`;
}
const slate='#829dad', pink='#df7bb3', orange='#f2a170', teal='#50b1c4';
const tSlate='#5c7280', tPink='#df70b0', tOrange='#c77f56', tTeal='#37858f';
[['A 268,838',slate,'school'],['A 1096,1232',slate,'dot'],['B 460,305',slate,'dot'],['B 1565,497',slate,'dot'],['B 298,1142',pink,'bed'],['B 1045,746','#69b255','tree'],
['C 590,707',slate,'dot'],['C 590,983',pink,'bed'],['D 254,1217',pink,'bed'],['D 416,1472',orange,'fork'],['D 533,1574',pink,'bed'],
['F 1111,737',slate,'dot'],['F 1037,1004',orange,'fork'],['F 935,1373',slate,'mail'],['F 459,1682',orange,'fork'],
['G 966,194',slate,'dot'],['G 941,1223',slate,'dot'],['G 1437,1409',pink,'bed'],['H 688,377',pink,'bed'],['H 658,731',slate,'dot'],['H 442,1604',slate,'dot'],['H 1100,122','#e9827f','medic'],['H 1450,542','#5f95ee','cart'],
['I 779,233',orange,'cup'],['I 568,377','#949edb','park'],['I 220,596',orange,'fork'],['I 392,875',orange,'fork'],['I 152,1007',orange,'cup'],['I 540,1067',orange,'fork'],['I 69,1316',orange,'fork'],['I 665,1388',orange,'fork'],['I 1240,602',teal,'mask'],
['J 280,263',teal,'camera'],['J 710,401',pink,'bed']].forEach(p=>pin(...p));

['A 426,792','A 1323,1257','B 815,299','B 1313,140','B 1452,426','C 948,1317','C 1080,1335','I 542,1223','I 765,1452'].forEach(s=>{
  const [x,y]=pts(s)[0];
  out+=`<g transform="translate(${x} ${y})"><rect x="-11" y="-11" width="22" height="22" rx="2" fill="#58b9f8" stroke="#fff" stroke-width="3" paint-order="stroke"/><path d="M-6.500-6.500C-6-9.500 6-9.500 6.500-6.500V6H5V8.500H2.500V6.500h-5V8.500H-5V6h-1.500z" fill="#fff"/><path d="M-4.500-5h9v4.500h-9zM-4.500 2h2.500v2h-2.500zM2 2h2.500v2H2z" fill="#58b9f8"/></g>`;
});

[['Homelands','A 78,940',355,tSlate],['Primary School','A -28,1024',356,tSlate],['Dunboyne Court','A 797,962',1184,tSlate],['- Sanctuary Retirement...','A 597,1047',1186,tSlate],
['Ashbourne House','B 372,119',806,tSlate],['Tessier Gardens','B 598,704',992,'#3a7d2c'],['The Seabury','B 209,1244',510,tPink],['Woods Bryce Baker','B 1182,599',1653,tSlate],['Lorrens Ladies Spa','B 591,1560',1054,tSlate],
['Woodland Park','C 641,664',1009,tSlate],['Hotel De La Mer','C 289,1085',678,tPink],['The Babbacombe','C 1380,1175',1809,tPink],['Royal Hotel and Carvery','C 1408,1430',1985,tOrange],['Babbacombe Bay','D 579,1532',957,tPink],
['Consol - World','F 847,467',1199,tSlate],['Class Sunbeds','F 842,551',1199,tSlate],['Pizza Hut','F 1088,962',1318,tOrange],['Victoria Park Post Office','F 289,1331',887,tSlate],['Domino\'s Pizza','F 177,1496',547,tOrange],
['Cary Park','G 766,695',999,'#3a7d2c'],['Lorna House','G 854,1326',1161,tSlate],['Anchorage','G 1264,1223',1527,tPink],['Cary Park Tennis Club','G 1430,1562',1962,tSlate],
['Trecarn Hotel Torquay','H 233,191',777,tPink],['Cary Lodge','H 474,833',746,tSlate],['Brunel Medical Practice','H 1015,224',1586,'#b06462'],['Tesco Express','H 1186,356',1541,'#4571b8'],
['Princes Street Car Park','I 150,191',650,'#6f75a9'],['Angels','I 711,334',856,tOrange],['Mirch Masala','I 142,410',433,tOrange],['Hanbury\'s','I 314,689',526,tOrange],['Abigail\'s Cafe','I 74,1109',367,tOrange],['Drakes Fish','I 586,1025',836,tOrange],['Yummies Kebab','I 271,1346',621,tOrange],['Himalaya','I -14,1418',191,tOrange],['Babbacombe Theatre','I 1162,416',1628,tTeal],
['Babbacombe Beach','J 208,77',608,tTeal],['Cary Arms &amp; Spa','J 637,215',971,tPink]].forEach(l=>label(...l));

// Destination marker
{const [x,y]=pts('H 1025,315')[0];
out+=`<g transform="translate(${x} ${y})"><path d="M0 0C-2-17-6-26-14-36C-21-45-25-50-25-57A25 25 0 1 1 25-57C25-50 21-45 14-36C6-26 2-17 0 0Z" fill="#d94f3d" stroke="#c63b2c" stroke-width="1"/><circle cy="-57" r="9.500" fill="#8a1b14"/></g>`;}
const map=document.getElementById('map');
map.setAttribute('font-family','Roboto, sans-serif');
map.innerHTML=out;
</script>
</body>
</html>
